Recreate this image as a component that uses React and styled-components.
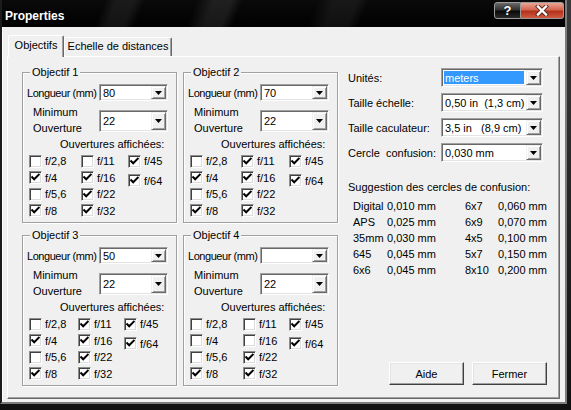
import React from 'react';
import styled, { createGlobalStyle } from 'styled-components';

const Global = createGlobalStyle`
  html, body { margin: 0; padding: 0; }
  body {
    width: 571px; height: 410px; overflow: hidden;
    font-family: "Liberation Sans", Arial, sans-serif;
    font-size: 11px; color: #000;
  }
  * { box-sizing: border-box; }
`;

const Screen = styled.div`
  width: 571px; height: 410px;
  background: linear-gradient(#3a3a3a, #101010);
`;

const Window = styled.div`
  width: 567px; height: 404px;
  display: flex; flex-direction: column;
  border-left: 2px solid #1c1c1c;
  border-right: 2px solid #7c7c7c;
  border-bottom: 2px solid #7c7c7c;
  background: #f0f0f0;
`;

const TitleBar = styled.div`
  height: 27px; flex: none;
  display: flex; align-items: flex-start;
  background:
    linear-gradient(112deg, transparent 0 18%, rgba(255,255,255,0.07) 20% 23%, transparent 25% 34%,
      rgba(255,255,255,0.09) 37% 40%, transparent 42% 55%, rgba(255,255,255,0.06) 58% 62%, transparent 64% 100%),
    linear-gradient(#0a0a0a, #000);
`;

const TitleText = styled.div`
  flex: 1;
  padding: 9px 0 0 3px;
  line-height: 14px;
  font-weight: bold; font-size: 12px; color: #fff;
`;

const TitleButtons = styled.div`
  display: flex; margin: 2px 1px 0 0;
`;

const HelpButton = styled.div`
  width: 27px; height: 17px;
  border: 1px solid #9a9a9a; border-radius: 3px 0 0 3px;
  background: linear-gradient(#6a6a6a, #333 45%, #0a0a0a 55%, #2a2a2a);
  color: #fff; font-weight: bold; font-size: 13px; line-height: 15px;
  text-align: center;
  text-shadow: 0 0 2px #000;
`;

const CloseButton = styled.div`
  width: 43px; height: 17px;
  border: 1px solid #9a9a9a; border-left: none; border-radius: 0 3px 3px 0;
  background: linear-gradient(#eaa597, #d4664f 45%, #b3311a 55%, #cf5a40);
  display: flex; align-items: center; justify-content: center;
`;

const Client = styled.div`
  flex: 1;
  display: flex; flex-direction: column;
  padding: 8px 5px 3px 5px;
  box-shadow: inset 1px 0 0 #fff;
`;

const TabStrip = styled.div`
  height: 22px; flex: none;
  display: flex; align-items: flex-end;
  margin-bottom: -1px;
  padding-left: 1px;
  position: relative; z-index: 1;
`;

const Tab = styled.div`
  width: ${p => p.$w}px;
  height: ${p => (p.$active ? 22 : 19)}px;
  margin-bottom: ${p => (p.$active ? 0 : 1)}px;
  background: #f0f0f0;
  border-top: 1px solid #fff;
  border-left: 1px solid #fff;
  border-right: 1px solid #696969;
  box-shadow: inset -1px 0 0 #a0a0a0;
  border-radius: 2px 2px 0 0;
  display: flex; justify-content: center;
  padding-top: ${p => (p.$active ? 3 : 2)}px;
  line-height: 13px;
`;

const Panel = styled.div`
  flex: 1;
  display: flex;
  border: 1px solid;
  border-color: #fff #696969 #696969 #fff;
  box-shadow: inset -1px -1px 0 #a0a0a0;
  background: #f0f0f0;
`;

const LensGrid = styled.div`
  align-self: flex-start;
  margin: 15px 0 0 14px;
  display: grid;
  grid-template-columns: 155px 155px;
  grid-template-rows: 151px 151px;
  column-gap: 6px; row-gap: 12px;
`;

const GroupBox = styled.div`
  position: relative;
  border: 1px solid #a0a0a0;
  box-shadow: inset 1px 1px 0 #fff, 1px 1px 0 #fff;
  display: flex; flex-direction: column;
`;

const Legend = styled.span`
  position: absolute;
  top: -7px; left: 7px;
  padding: 0 2px;
  background: #f0f0f0;
  line-height: 13px;
`;

const LengthRow = styled.div`
  display: flex; align-items: center;
  height: 17px;
  margin: 11px 0 0 4px;
`;

const LengthLabel = styled.span`
  width: 72px; flex: none;
  white-space: nowrap;
  letter-spacing: -0.45px;
`;

const MinRow = styled.div`
  display: flex; align-items: center;
  height: 22px;
  margin: 9px 0 0 10px;
`;

const MinLabel = styled.div`
  width: 66px; flex: none;
  line-height: 16px;
  margin-top: -2px;
`;

const Heading = styled.div`
  line-height: 13px;
  margin: ${p => p.$m};
  white-space: pre;
`;

const CheckGrid = styled.div`
  display: grid;
  grid-template-columns: ${p => p.$cols[0]}px ${p => p.$cols[1]}px auto;
  margin: 2px 0 0 6px;
`;

const CheckColumn = styled.div`
  display: flex; flex-direction: column;
`;

const CheckItem = styled.label`
  display: flex; align-items: center; gap: 3px;
  height: 16.5px;
  margin-top: ${p => (p.$drop ? 3 : 0)}px;
`;

const CheckBox = styled.span`
  width: 13px; height: 13px; flex: none;
  background: #fff;
  border: 1px solid;
  border-color: #8e8e8e #fff #fff #8e8e8e;
  box-shadow: inset 1px 1px 0 #404040, inset -1px -1px 0 #dcdcdc;
  display: flex; align-items: center; justify-content: center;
`;

const Combo = styled.div`
  display: flex;
  width: ${p => p.$w}px; height: ${p => p.$h}px; flex: none;
  background: #fff;
  border: 1px solid;
  border-color: #a0a0a0 #fff #fff #a0a0a0;
  box-shadow: inset 1px 1px 0 #696969, inset -1px -1px 0 #e3e3e3;
  padding: 1px;
`;

const ComboValue = styled.div`
  flex: 1;
  display: flex; align-items: center;
  white-space: pre;
  padding-left: ${p => (p.$selected ? 1 : 2)}px;
  margin: ${p => (p.$selected ? '1px 2px 1px 1px' : '0')};
  background: ${p => (p.$selected ? '#3399ff' : 'transparent')};
  color: ${p => (p.$selected ? '#fff' : '#000')};
`;

const ArrowButton = styled.div`
  width: 15px; flex: none;
  background: #f0f0f0;
  border: 1px solid;
  border-color: #f0f0f0 #696969 #696969 #f0f0f0;
  box-shadow: inset 1px 1px 0 #fff, inset -1px -1px 0 #a0a0a0;
  display: flex; align-items: center; justify-content: center;
`;

const RightSection = styled.div`
  flex: 1;
  display: flex; flex-direction: column;
  padding: 11px 16px 13px 10px;
`;

const SettingRow = styled.div`
  display: flex; align-items: center;
  height: 19px;
  margin-bottom: 6px;
`;

const SettingLabel = styled.span`
  width: 93px; flex: none;
  white-space: pre;
`;

const SuggestTable = styled.div`
  display: grid;
  grid-template-columns: 34px 78px 33px auto;
  grid-auto-rows: 16px;
  align-items: center;
  padding-left: 5px;
  margin-top: 4px;
  white-space: nowrap;
`;

const ButtonRow = styled.div`
  margin-top: auto;
  display: flex; justify-content: flex-end; gap: 8px;
`;

const PushButton = styled.button`
  width: 75px; height: 23px;
  font: inherit; color: #000;
  background: #f0f0f0;
  border: 1px solid;
  border-color: #fff #404040 #404040 #fff;
  box-shadow: inset -1px -1px 0 #a0a0a0, inset 1px 1px 0 #e3e3e3;
  padding: 0;
`;

const Arrow = () => (
  <svg width="7" height="4" viewBox="0 0 7 4"><polygon points="0,0 7,0 3.5,4" fill="#000" /></svg>
);

const Check = () => (
  <svg width="9" height="9" viewBox="0 0 9 9">
    <path d="M1.2 4.2 L3.2 6.3 L7.8 1.6" stroke="#000" strokeWidth="2" fill="none" strokeLinecap="square" />
  </svg>
);

const CloseX = () => (
  <svg width="16" height="11" viewBox="0 0 16 11">
    <path d="M4 1.5 L12 9.5 M12 1.5 L4 9.5" stroke="#5a2a20" strokeWidth="4.2" strokeLinecap="square" />
    <path d="M4 1.5 L12 9.5 M12 1.5 L4 9.5" stroke="#fff" strokeWidth="2.4" strokeLinecap="square" />
  </svg>
);

const ComboBox = ({ value, w, h, selected }) => (
  <Combo $w={w} $h={h}>
    <ComboValue $selected={selected}>{value}</ComboValue>
    <ArrowButton><Arrow /></ArrowButton>
  </Combo>
);

const Checkbox = ({ label, checked, drop }) => (
  <CheckItem $drop={drop}>
    <CheckBox>{checked && <Check />}</CheckBox>
    {label}
  </CheckItem>
);

const lenses = [
  { title: 'Objectif 1', length: '80', cols: [52, 47], on: ['f/4', 'f/8', 'f/16', 'f/22', 'f/32', 'f/45', 'f/64'] },
  { title: 'Objectif 2', length: '70', cols: [51, 48], on: ['f/4', 'f/8', 'f/11', 'f/16', 'f/22', 'f/32', 'f/45', 'f/64'] },
  { title: 'Objectif 3', length: '50', cols: [49, 46], on: ['f/4', 'f/8', 'f/11', 'f/16', 'f/22', 'f/32', 'f/45', 'f/64'] },
  { title: 'Objectif 4', length: '', cols: [53, 46], on: ['f/8', 'f/22', 'f/32', 'f/45', 'f/64'] },
];

const col1 = ['f/2,8', 'f/4', 'f/5,6', 'f/8'];
const col2 = ['f/11', 'f/16', 'f/22', 'f/32'];

const Lens = ({ lens }) => (
  <GroupBox>
    <Legend>{lens.title}</Legend>
    <LengthRow>
      <LengthLabel>Longueur (mm)</LengthLabel>
      <ComboBox value={lens.length} w={69} h={17} />
    </LengthRow>
    <MinRow>
      <MinLabel>Minimum<br />Ouverture</MinLabel>
      <ComboBox value="22" w={69} h={22} />
    </MinRow>
    <Heading $m="6px 0 0 37px">Ouvertures affichées:</Heading>
    <CheckGrid $cols={lens.cols}>
      <CheckColumn>
        {col1.map(f => <Checkbox key={f} label={f} checked={lens.on.includes(f)} />)}
      </CheckColumn>
      <CheckColumn>
        {col2.map(f => <Checkbox key={f} label={f} checked={lens.on.includes(f)} />)}
      </CheckColumn>
      <CheckColumn>
        <Checkbox label="f/45" checked={lens.on.includes('f/45')} />
        <Checkbox label="f/64" checked={lens.on.includes('f/64')} drop />
      </CheckColumn>
    </CheckGrid>
  </GroupBox>
);

const settings = [
  { label: 'Unités:', value: 'meters', selected: true },
  { label: 'Taille échelle:', value: '0,50 in  (1,3 cm)' },
  { label: 'Taille caculateur:', value: '3,5 in   (8,9 cm)' },
  { label: 'Cercle  confusion:', value: '0,030 mm' },
];

const suggestions = [
  ['Digital', '0,010 mm', '6x7', '0,060 mm'],
  ['APS', '0,025 mm', '6x9', '0,070 mm'],
  ['35mm', '0,030 mm', '4x5', '0,100 mm'],
  ['645', '0,045 mm', '5x7', '0,150 mm'],
  ['6x6', '0,045 mm', '8x10', '0,200 mm'],
];

export default function App() {
  return (
    <Screen>
      <Global />
      <Window>
        <TitleBar>
          <TitleText>Properties</TitleText>
          <TitleButtons>
            <HelpButton>?</HelpButton>
            <CloseButton><CloseX /></CloseButton>
          </TitleButtons>
        </TitleBar>
        <Client>
          <TabStrip>
            <Tab $active $w={56}>Objectifs</Tab>
            <Tab $w={108}>Echelle de distances</Tab>
          </TabStrip>
          <Panel>
            <LensGrid>
              {lenses.map(l => <Lens key={l.title} lens={l} />)}
            </LensGrid>
            <RightSection>
              {settings.map(s => (
                <SettingRow key={s.label}>
                  <SettingLabel>{s.label}</SettingLabel>
                  <ComboBox value={s.value} w={102} h={19} selected={s.selected} />
                </SettingRow>
              ))}
              <Heading $m="13px 0 0 0">Suggestion des cercles de confusion:</Heading>
              <SuggestTable>
                {suggestions.flat().map((t, i) => <span key={i}>{t}</span>)}
              </SuggestTable>
              <ButtonRow>
                <PushButton>Aide</PushButton>
                <PushButton>Fermer</PushButton>
              </ButtonRow>
            </RightSection>
          </Panel>
        </Client>
      </Window>
    </Screen>
  );
}
